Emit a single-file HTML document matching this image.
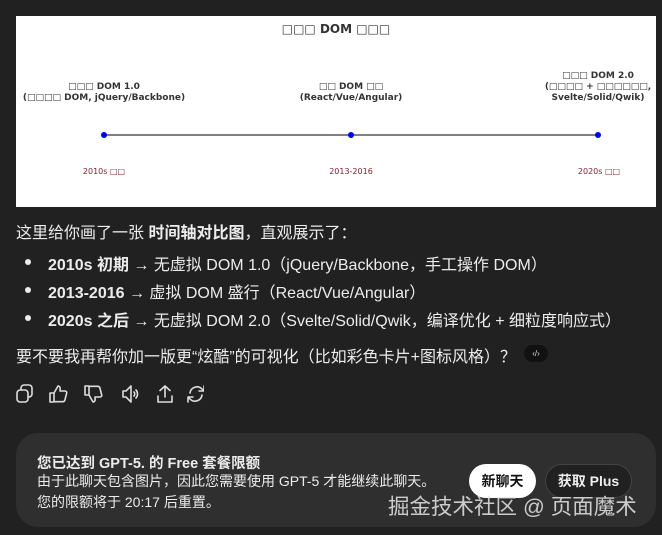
<!DOCTYPE html>
<html><head><meta charset="utf-8"><style>
body{margin:0;width:662px;height:535px;background:#212121;overflow:hidden;font-family:"Liberation Sans","Noto Sans CJK SC",sans-serif;color:#ececec;position:relative}
.img{position:absolute;left:16px;top:16px;width:640px;height:191px;background:#fff}
.t{position:absolute;font-family:"DejaVu Sans","Noto Sans CJK SC",sans-serif;color:#333;text-align:center;white-space:nowrap}
.b{font-weight:bold;font-size:9px;line-height:11px}
.r{font-size:8px;color:#8b1a2b}
.txt{position:absolute;left:16px;font-size:16px;white-space:nowrap}
.li{position:absolute;left:24px;font-size:16px;white-space:nowrap}
.li:before{content:"";position:absolute;left:1px;top:8px;width:6px;height:6px;border-radius:50%;background:#ececec}
.li span{margin-left:24px}
.card{position:absolute;left:16px;top:433px;width:640px;height:94px;background:#2f2f2f;border-radius:22px}
.btn{position:absolute;top:464px;height:34px;border-radius:17px;font-size:14px;font-weight:bold;line-height:34px;text-align:center}
</style></head><body>
<div class="img">
 <div class="t" style="left:0;width:640px;top:6px;font-size:12px;font-weight:bold">□□□ DOM □□□</div>
 <div class="t b" style="left:-12px;width:200px;top:66px">□□□ DOM 1.0<br>(□□□□ DOM, jQuery/Backbone)</div>
 <div class="t b" style="left:235px;width:200px;top:66px">□□ DOM □□<br>(React/Vue/Angular)</div>
 <div class="t b" style="left:482px;width:200px;top:55px">□□□ DOM 2.0<br>(□□□□ + □□□□□□,<br>Svelte/Solid/Qwik)</div>
 <div style="position:absolute;left:88px;top:118px;width:495px;height:2px;background:#808080"></div>
 <div style="position:absolute;left:85px;top:116px;width:6px;height:6px;border-radius:50%;background:#00f"></div>
 <div style="position:absolute;left:332px;top:116px;width:6px;height:6px;border-radius:50%;background:#00f"></div>
 <div style="position:absolute;left:579px;top:116px;width:6px;height:6px;border-radius:50%;background:#00f"></div>
 <div class="t r" style="left:38px;width:100px;top:151px">2010s □□</div>
 <div class="t r" style="left:285px;width:100px;top:151px">2013-2016</div>
 <div class="t r" style="left:533px;width:100px;top:151px">2020s □□</div>
</div>
<div class="txt" style="top:219px">这里给你画了一张 <b>时间轴对比图</b>，直观展示了：</div>
<div class="li" style="top:251px"><span><b>2010s 初期</b> → 无虚拟 DOM 1.0（jQuery/Backbone，手工操作 DOM）</span></div>
<div class="li" style="top:279px"><span><b>2013-2016</b> → 虚拟 DOM 盛行（React/Vue/Angular）</span></div>
<div class="li" style="top:307px"><span><b>2020s 之后</b> → 无虚拟 DOM 2.0（Svelte/Solid/Qwik，编译优化 + 细粒度响应式）</span></div>
<div class="txt" style="top:343px">要不要我再帮你加一版更“炫酷”的可视化（比如彩色卡片+图标风格）？</div>
<div style="position:absolute;left:524px;top:345px;width:24px;height:17px;border-radius:9px;background:#111;color:#ddd;font-size:8px;line-height:17px;text-align:center">‹/›</div>
<svg style="position:absolute;left:14px;top:383px" width="190" height="22" fill="none" stroke="#ddd" stroke-width="1.6" stroke-linejoin="round" stroke-linecap="round">
 <rect x="3" y="7" width="11" height="12" rx="3"/><path d="M7 7V5a3 3 0 0 1 3-3h5a3 3 0 0 1 3 3v6a3 3 0 0 1-3 3h-1"/>
 <path d="M40 10v9h-4v-9zM40 10l4-7c2 0 2.5 2 2 5h5c1.2 0 2 1 1.7 2l-1.8 7c-.3 1-1 1.7-2 1.7H40"/>
 <path d="M75 12V3h-4v9zM75 12l4 7c2 0 2.5-2 2-5h5c1.2 0 2-1 1.7-2l-1.8-7c-.3-1-1-1.7-2-1.7H75"/>
 <path d="M109 8h3l5-5v16l-5-5h-3zM120 9c1 1 1 3 0 4M122 7c2 2 2 6 0 8"/>
 <path d="M151 3v11M146 7.5l5-4.5 5 4.5M144 13v6h14v-6"/>
 <path d="M176 10a7 7 0 0 1 12-4l1.5 1.5M190 3v5h-5M188 12a7 7 0 0 1-12 4l-1.5-1.5M174 19v-5h5"/>
</svg>
<div class="card"></div>
<div style="position:absolute;left:37px;top:452px;font-size:14.5px;font-weight:bold;white-space:nowrap">您已达到 GPT-5. 的 Free 套餐限额</div>
<div style="position:absolute;left:37px;top:471px;font-size:14px;line-height:21px;white-space:nowrap">由于此聊天包含图片，因此您需要使用 GPT-5 才能继续此聊天。<br>您的限额将于 20:17 后重置。</div>
<div class="btn" style="left:469px;width:67px;background:#fff;color:#111">新聊天</div>
<div class="btn" style="left:545px;width:85px;background:#212121;border:1px solid #444;height:32px;line-height:32px;color:#eee">获取 Plus</div>
<div style="position:absolute;left:388px;top:490px;font-size:21.5px;color:rgba(230,230,230,0.85);white-space:nowrap">掘金技术社区 @ 页面魔术</div>
</body></html>
